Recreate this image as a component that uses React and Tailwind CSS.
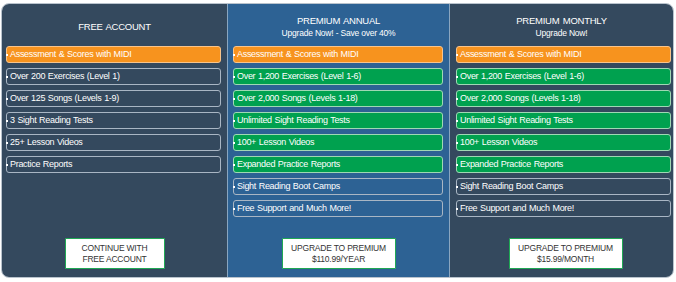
import React from "react";

const plans = [
  {
    key: "free",
    title: "FREE ACCOUNT",
    subtitle: null,
    bg: "bg-[#34495e]",
    pad: "pl-[4px] pr-[6px]",
    button: ["CONTINUE WITH", "FREE ACCOUNT"],
    buttonW: "w-[100px]",
    features: [
      ["Assessment & Scores with MIDI", "orange"],
      ["Over 200 Exercises (Level 1)", "outline"],
      ["Over 125 Songs (Levels 1-9)", "outline"],
      ["3 Sight Reading Tests", "outline"],
      ["25+ Lesson Videos", "outline"],
      ["Practice Reports", "outline"],
    ],
  },
  {
    key: "annual",
    title: "PREMIUM ANNUAL",
    subtitle: "Upgrade Now! - Save over 40%",
    bg: "bg-[#2d6294] border-x border-[#8aa6c0]",
    pad: "pl-[5px] pr-[6px]",
    button: ["UPGRADE TO PREMIUM", "$110.99/YEAR"],
    buttonW: "w-[114px]",
    features: [
      ["Assessment & Scores with MIDI", "orange"],
      ["Over 1,200 Exercises (Level 1-6)", "green"],
      ["Over 2,000 Songs (Levels 1-18)", "green"],
      ["Unlimited Sight Reading Tests", "green"],
      ["100+ Lesson Videos", "green"],
      ["Expanded Practice Reports", "green"],
      ["Sight Reading Boot Camps", "outline"],
      ["Free Support and Much More!", "outline"],
    ],
  },
  {
    key: "monthly",
    title: "PREMIUM MONTHLY",
    subtitle: "Upgrade Now!",
    bg: "bg-[#34495e]",
    pad: "pl-[6px] pr-[2px]",
    button: ["UPGRADE TO PREMIUM", "$15.99/MONTH"],
    buttonW: "w-[114px]",
    features: [
      ["Assessment & Scores with MIDI", "orange"],
      ["Over 1,200 Exercises (Level 1-6)", "green"],
      ["Over 2,000 Songs (Levels 1-18)", "green"],
      ["Unlimited Sight Reading Tests", "green"],
      ["100+ Lesson Videos", "green"],
      ["Expanded Practice Reports", "green"],
      ["Sight Reading Boot Camps", "outline"],
      ["Free Support and Much More!", "outline"],
    ],
  },
];

const itemStyles = {
  orange: "bg-[#f7931e] border-[#f9c48a]",
  green: "bg-[#00a14f] border-[#9fd8b4]",
  outline: "bg-transparent border-[#a9b6c4]",
};

const Feature = ({ text, kind }) => (
  <div
    className={`h-[17px] flex items-center rounded-[3px] border ${itemStyles[kind]}`}
  >
    <span className="w-[2px] h-[2px] bg-white -ml-[1px] mr-[2px] shrink-0"></span>
    <span className="text-white text-[9px] tracking-[-0.3px] [word-spacing:0.5px] leading-none whitespace-nowrap">
      {text}
    </span>
  </div>
);

const PlanColumn = ({ plan }) => (
  <div className={`flex flex-col ${plan.bg} ${plan.key === "annual" ? "w-[223px]" : plan.key === "free" ? "w-[225px]" : "flex-1"}`}>
    {/* Header */}
    <div className="h-[42px] flex flex-col items-center text-white">
      {plan.subtitle ? (
        <>
          <div className="mt-[11px] text-[9.5px] tracking-[-0.25px] [word-spacing:1px] leading-[12px]">{plan.title}</div>
          <div className="mt-[1px] text-[8.5px] tracking-[-0.2px] leading-[11px]">{plan.subtitle}</div>
        </>
      ) : (
        <div className="mt-[17px] text-[9.5px] tracking-[-0.25px] [word-spacing:1px] leading-[12px]">{plan.title}</div>
      )}
    </div>

    {/* Features */}
    <div className={`flex flex-col gap-[5px] ${plan.pad}`}>
      {plan.features.map(([text, kind]) => (
        <Feature key={text} text={text} kind={kind} />
      ))}
    </div>

    {/* Button */}
    <div className={`mt-auto pb-[8px] flex justify-center ${plan.key === "monthly" ? "pl-[8px]" : ""}`}>
      <button
        type="button"
        className={`${plan.buttonW} h-[31px] bg-white border border-[#1fa854] rounded-[1px] flex flex-col items-center justify-center text-[#333] text-[8.5px] tracking-[-0.2px] leading-[11px]`}
      >
        <span>{plan.button[0]}</span>
        <span>{plan.button[1]}</span>
      </button>
    </div>
  </div>
);

const App = () => {
  return (
    <div
      className="w-[676px] h-[282px] bg-white pt-[3px] pl-[1px]"
      style={{ fontFamily: '"Liberation Sans", Arial, sans-serif' }}
    >
      <div className="w-[673px] h-[275px] rounded-[8px] border border-[#b9c3cd] flex overflow-hidden">
        {plans.map((plan) => (
          <PlanColumn key={plan.key} plan={plan} />
        ))}
      </div>
    </div>
  );
};

export default App;
